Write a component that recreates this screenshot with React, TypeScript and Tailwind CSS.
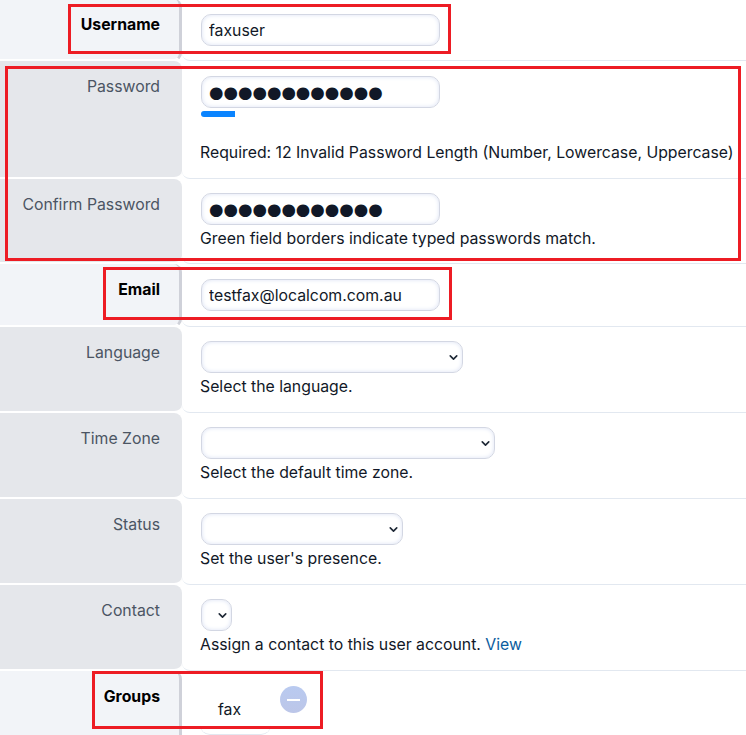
import type { ReactNode } from "react";
import { ChevronDown } from "lucide-react";

const inputClass =
  "ml-px block h-[32px] w-[239px] rounded-[10px] border border-[#d3d7e3] bg-white px-[7px] text-[15.8px] text-[#111827] shadow-[inset_0_0_4px_#dbe2f4] outline-none";
const dotsClass =
  "ml-px block h-[32px] w-[239px] rounded-[10px] border border-[#d3d7e3] bg-white px-[7px] font-['DejaVu_Sans',sans-serif] text-[16.6px] text-[#111827] shadow-[inset_0_0_4px_#dbe2f4] outline-none";

function Row({ label, strong, bottom, children }: { label: string; strong?: boolean; bottom?: string; children: ReactNode }) {
  return (
    <div className="flex">
      <div
        className={
          strong
            ? "w-[182px] shrink-0 rounded-r-lg border-r-[3px] border-b-2 border-r-[#cfd1d9] border-b-white bg-[#f2f4f8] pt-[15px] pr-[19px] text-right text-[15.8px] leading-[22px] font-bold text-black"
            : "w-[182px] shrink-0 rounded-r-lg border-b-2 border-b-white bg-[#e5e7eb] pt-[15px] pr-[22px] text-right text-[15.8px] leading-[22px] text-[#4b5563]"
        }
      >
        {label}
      </div>
      <div
        className={`min-w-0 flex-1 rounded-bl-lg border-b border-[#e2e8f0] pt-[15px] pl-[18px] text-[15.8px] leading-[22px] whitespace-nowrap text-[#111827] ${bottom ?? "pb-[14px]"}`}
      >
        {children}
      </div>
    </div>
  );
}

function Select({ width }: { width: string }) {
  return (
    <div className={`relative -mt-px ml-px ${width}`}>
      <select className="block h-[32px] w-full appearance-none rounded-[10px] border border-[#d3d7e3] bg-white shadow-[inset_0_0_4px_#dbe2f4] outline-none" />
      <ChevronDown size={13} strokeWidth={3} className="pointer-events-none absolute top-[10px] right-[3px] text-[#1f2937]" />
    </div>
  );
}

export default function App() {
  return (
    <div className="relative h-[735px] w-[746px] overflow-hidden bg-white font-['Inter',sans-serif]">
      <div className="-mt-px">
        <Row label="Username" strong>
          <input readOnly value="faxuser" className={inputClass} />
        </Row>
        <Row label="Password">
          <input readOnly value="●●●●●●●●●●●●" className={dotsClass} />
          <div className="mt-[3px] ml-px h-[6px] w-[34px] rounded-l-sm bg-[#0a84ff]" />
          <div className="mt-[25px]">Required: 12 Invalid Password Length (Number, Lowercase, Uppercase)</div>
        </Row>
        <Row label="Confirm Password" bottom="pb-[13px]">
          <input readOnly value="●●●●●●●●●●●●" className={`-mt-px ${dotsClass}`} />
          <div className="mt-[3px]">Green field borders indicate typed passwords match.</div>
        </Row>
        <Row label="Email" strong bottom="pb-[15px]">
          <input readOnly value="testfax@localcom.com.au" className={inputClass} />
        </Row>
        <Row label="Language">
          <Select width="w-[262px]" />
          <div className="mt-[3px]">Select the language.</div>
        </Row>
        <Row label="Time Zone">
          <Select width="w-[294px]" />
          <div className="mt-[3px]">Select the default time zone.</div>
        </Row>
        <Row label="Status">
          <Select width="w-[202px]" />
          <div className="mt-[3px]">Set the user's presence.</div>
        </Row>
        <Row label="Contact">
          <Select width="w-[31px]" />
          <div className="mt-[3px]">
            Assign a contact to this user account. <span className="text-[#0b5c9e]">View</span>
          </div>
        </Row>
        <Row label="Groups" strong bottom="pb-[20px]">
          <div className="flex h-[49px] w-[71px] rounded-b-[10px] border-b border-[#e2e8f0] pl-[18px]">
            <span className="mt-[13px]">fax</span>
            <span className="ml-[39px] flex h-[27px] w-[27px] shrink-0 items-center justify-center rounded-full bg-gradient-to-b from-[#b9caf0] to-[#bcc6e8]">
              <span className="h-[2px] w-[13px] bg-white" />
            </span>
          </div>
        </Row>
      </div>
      <div className="pointer-events-none absolute top-[4px] left-[68px] h-[50px] w-[383px] border-[3px] border-[#ed1c24]" />
      <div className="pointer-events-none absolute top-[66px] left-[5px] h-[195px] w-[736px] border-[3px] border-[#ed1c24]" />
      <div className="pointer-events-none absolute top-[267px] left-[103px] h-[53px] w-[349px] border-[3px] border-[#ed1c24]" />
      <div className="pointer-events-none absolute top-[671px] left-[92px] h-[58px] w-[231px] border-[3px] border-[#ed1c24]" />
    </div>
  );
}
